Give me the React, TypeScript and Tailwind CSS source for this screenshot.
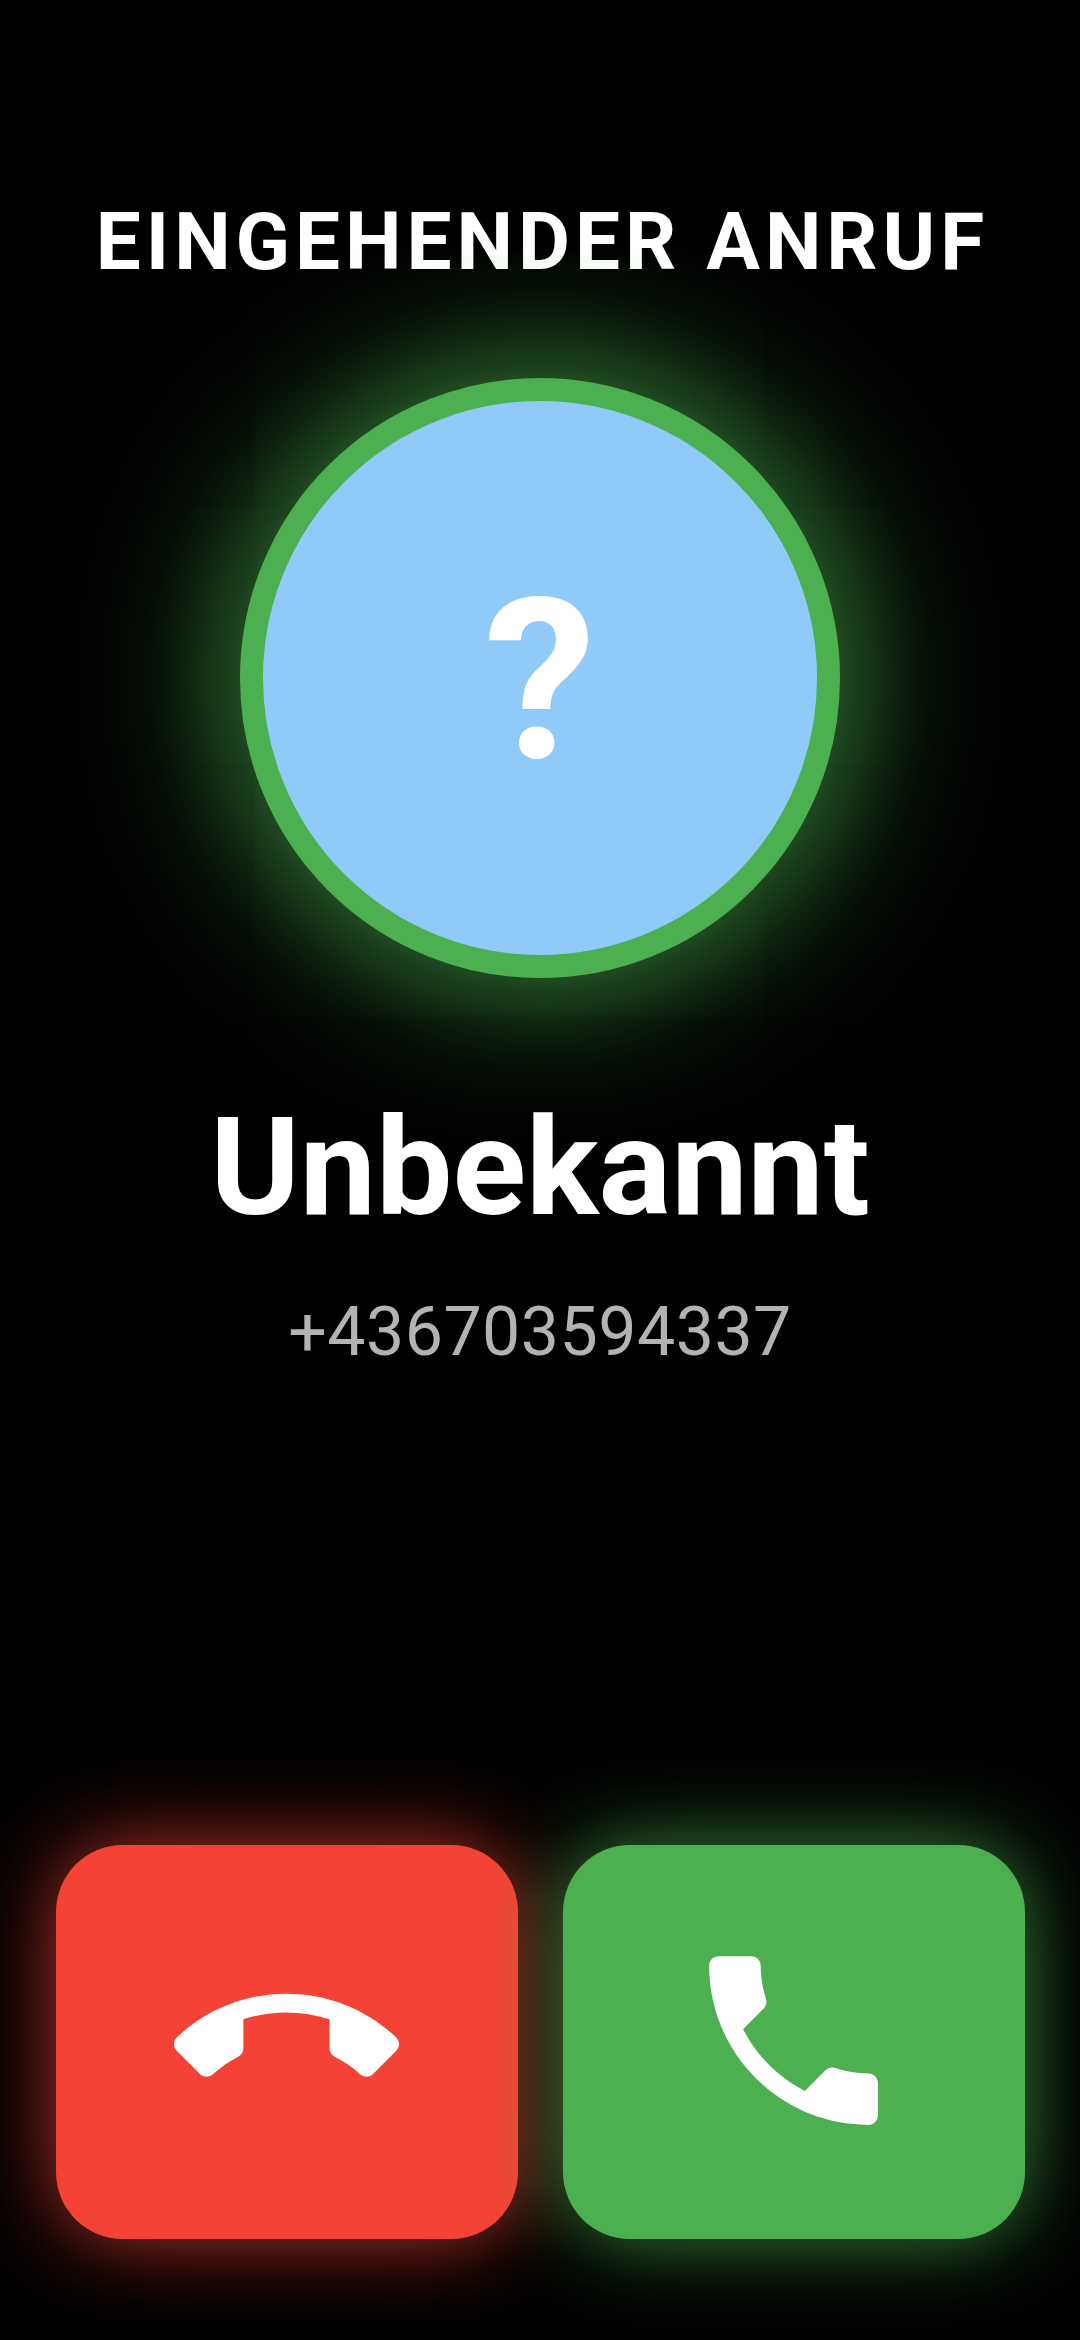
const ROBOTO = "font-['Roboto',sans-serif]";

function CallIcon() {
  return (
    <svg viewBox="0 0 24 24" className="w-[225px] h-[225px] fill-white">
      <path d="M6.62 10.79c1.44 2.83 3.76 5.14 6.59 6.59l2.2-2.2c.27-.27.67-.36 1.02-.24 1.12.37 2.33.57 3.57.57.55 0 1 .45 1 1V20c0 .55-.45 1-1 1-9.39 0-17-7.61-17-17 0-.55.45-1 1-1h3.5c.55 0 1 .45 1 1 0 1.25.2 2.45.57 3.57.11.35.03.74-.25 1.02l-2.2 2.2z" />
    </svg>
  );
}

function CallEndIcon() {
  return (
    <svg viewBox="0 0 24 24" className="w-[225px] h-[225px] fill-white">
      <path d="M12 9c-1.6 0-3.15.25-4.6.72v3.1c0 .39-.23.74-.56.9-.98.49-1.87 1.12-2.66 1.85-.18.18-.43.28-.7.28-.28 0-.53-.11-.71-.29L.29 13.08c-.18-.17-.29-.42-.29-.7 0-.28.11-.53.29-.71C3.34 8.78 7.46 7 12 7s8.66 1.78 11.71 4.67c.18.18.29.43.29.71 0 .28-.11.53-.29.71l-2.48 2.48c-.18.18-.43.29-.71.29-.27 0-.52-.11-.7-.28-.79-.74-1.69-1.36-2.67-1.85-.33-.16-.56-.5-.56-.9v-3.1C15.15 9.25 13.6 9 12 9z" />
    </svg>
  );
}

export default function App() {
  return (
    <div className={`w-[1080px] h-[2340px] bg-black overflow-hidden flex flex-col items-center text-white ${ROBOTO}`}>
      <h1 className="mt-[197px] h-[90px] pl-[5px] leading-[90px] text-[80px] font-bold tracking-[5px] text-center whitespace-nowrap">
        EINGEHENDER ANRUF
      </h1>

      <div className="mt-[91px] w-[600px] h-[600px] rounded-full bg-[#90caf9] border-[23px] border-[#4caf50] shadow-[0_0_150px_8px_rgba(76,175,80,0.85)] flex items-center justify-center">
        <span className="pt-[7px] text-[224px] leading-none font-bold">?</span>
      </div>

      <h2 className="mt-[110px] h-[160px] leading-[160px] text-[136px] font-bold text-center">Unbekannt</h2>

      <p className="mt-[44px] h-[80px] leading-[80px] text-[68px] tracking-[0.5px] text-[#b3b3b3] text-center">+436703594337</p>

      <div className="mt-auto mb-[101px] flex gap-[45px]">
        <button className="w-[462px] h-[394px] pb-[3px] rounded-[67px] bg-[#f44336] shadow-[0_0_84px_rgba(244,67,54,0.75)] flex items-center justify-center">
          <CallEndIcon />
        </button>
        <button className="w-[462px] h-[394px] pb-[3px] rounded-[67px] bg-[#4caf50] shadow-[0_0_84px_rgba(76,175,80,0.75)] flex items-center justify-center">
          <CallIcon />
        </button>
      </div>
    </div>
  );
}
